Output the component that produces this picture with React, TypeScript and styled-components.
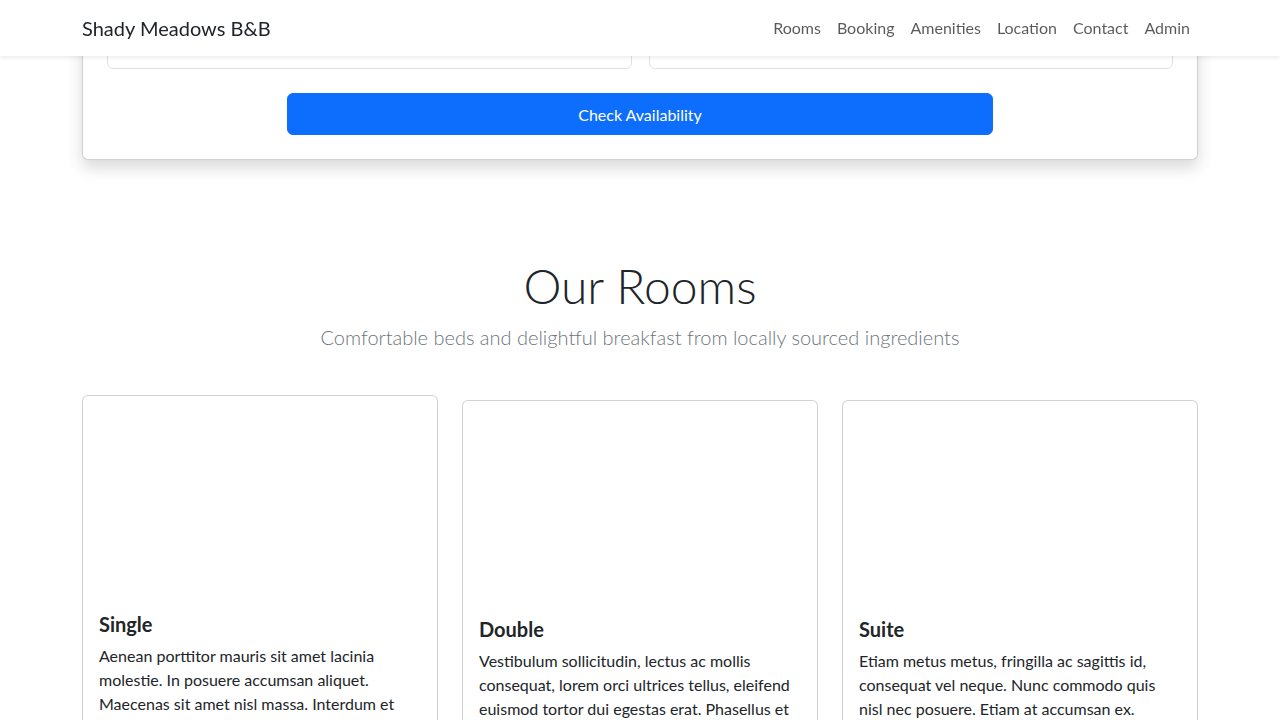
import React, { useLayoutEffect, useRef } from "react";
import styled, { createGlobalStyle } from "styled-components";

const FONT = `Lato, "Open Sans", "Liberation Sans", sans-serif`;

const Global = createGlobalStyle`
  html { scroll-behavior: auto; }
  html, body { margin: 0; padding: 0; }
  body {
    font-family: ${FONT};
    font-size: 16px;
    line-height: 1.5;
    color: #212529;
    background: #fff;
  }
  *, *::before, *::after { box-sizing: border-box; }
`;

const Container = styled.div`
  max-width: 1140px;
  margin: 0 auto;
  padding: 0 12px;
`;

const NavBar = styled.nav`
  position: fixed;
  top: 0;
  left: 0;
  right: 0;
  z-index: 20;
  height: 56px;
  background: #fff;
  box-shadow: 0 0.125rem 0.25rem rgba(0, 0, 0, 0.075);
`;

const NavInner = styled(Container)`
  display: flex;
  align-items: center;
  justify-content: space-between;
  height: 100%;
`;

const Brand = styled.a`
  font-size: 20px;
  line-height: 30px;
  color: #212529;
  text-decoration: none;
`;

const NavList = styled.ul`
  display: flex;
  list-style: none;
  margin: 0;
  padding: 0;
`;

const NavLink = styled.a`
  display: block;
  padding: 8px;
  font-size: 16px;
  color: rgba(0, 0, 0, 0.65);
  text-decoration: none;
`;

const Hero = styled.header`
  padding: 140px 0 120px;
  background: #f1f3f5;
  text-align: center;
`;

const HeroTitle = styled.h1`
  margin: 0 0 12px;
  font-size: 40px;
  font-weight: 300;
`;

const BookingSection = styled.section`
  padding: 48px 0 48px;
`;

const BookingCard = styled.div`
  background: #fff;
  border: 1px solid rgba(0, 0, 0, 0.175);
  border-radius: 6px;
  box-shadow: 0 0.5rem 1rem rgba(0, 0, 0, 0.15);
  padding: 24px;
`;

const BookingTitle = styled.h3`
  margin: 0 0 24px;
  font-size: 24px;
  font-weight: 500;
  text-align: center;
`;

const DateRow = styled.div`
  display: grid;
  grid-template-columns: 1fr 1fr;
  gap: 17px;
`;

const Field = styled.div`
  display: flex;
  flex-direction: column;
`;

const Label = styled.label`
  margin-bottom: 8px;
`;

const DateInput = styled.input`
  height: 39px;
  padding: 0 12px 10px;
  font-family: ${FONT};
  font-size: 16px;
  color: #212529;
  border: 1px solid #dee2e6;
  border-radius: 6px;
  background: #fff;
`;

const ButtonRow = styled.div`
  display: flex;
  justify-content: center;
  margin-top: 24px;
`;

const PrimaryButton = styled.button`
  width: 706px;
  height: 42px;
  border: 1px solid #0d6efd;
  border-radius: 6px;
  background: #0d6efd;
  color: #fff;
  font-family: ${FONT};
  font-size: 16px;
`;

const RoomsSection = styled.section`
  padding: 49px 0 48px;
`;

const SectionHead = styled.div`
  text-align: center;
  margin-bottom: 48px;
`;

const SectionTitle = styled.h2`
  margin: 0 0 7px;
  font-size: 48px;
  font-weight: 300;
  line-height: 1.2;
`;

const Lead = styled.p`
  margin: 0;
  font-size: 20px;
  font-weight: 300;
  color: #6c757d;
`;

const RoomGrid = styled.div`
  display: grid;
  grid-template-columns: repeat(3, 1fr);
  gap: 24px;
  align-items: start;
`;

const RoomCard = styled.div<{ $raised?: boolean }>`
  border: 1px solid rgba(0, 0, 0, 0.175);
  border-radius: 6px;
  background: #fff;
  overflow: hidden;
  transform: ${(p) => (p.$raised ? "translateY(-5px)" : "none")};
`;

const RoomImage = styled.div`
  height: 200px;
`;

const RoomBody = styled.div`
  padding: 16px;
`;

const RoomTitle = styled.h5`
  margin: 0 0 8px;
  font-size: 20px;
  font-weight: 700;
  line-height: 1.2;
`;

const RoomText = styled.p`
  margin: 0 0 16px;
`;

const Price = styled.div`
  font-size: 20px;
  font-weight: 700;
  margin-bottom: 12px;
`;

const OutlineButton = styled.a`
  display: inline-block;
  padding: 6px 12px;
  border: 1px solid #0d6efd;
  border-radius: 6px;
  color: #0d6efd;
  text-decoration: none;
`;

const Footer = styled.footer`
  padding: 48px 0;
  background: #212529;
  color: #fff;
  text-align: center;
`;

const rooms = [
  {
    name: "Single",
    text:
      "Aenean porttitor mauris sit amet lacinia molestie. In posuere accumsan aliquet. Maecenas sit amet nisl massa. Interdum et malesuada fames ac ante.",
    price: "£100",
    raised: true,
  },
  {
    name: "Double",
    text:
      "Vestibulum sollicitudin, lectus ac mollis consequat, lorem orci ultrices tellus, eleifend euismod tortor dui egestas erat. Phasellus et ipsum nisl.",
    price: "£150",
  },
  {
    name: "Suite",
    text:
      "Etiam metus metus, fringilla ac sagittis id, consequat vel neque. Nunc commodo quis nisl nec posuere. Etiam at accumsan ex.",
    price: "£225",
  },
];

const links = ["Rooms", "Booking", "Amenities", "Location", "Contact", "Admin"];

export default function App() {
  const cardRef = useRef<HTMLDivElement>(null);

  useLayoutEffect(() => {
    if (cardRef.current) {
      const r = cardRef.current.getBoundingClientRect();
      window.scrollTo(0, window.scrollY + r.bottom - 160);
    }
  }, []);

  return (
    <>
      <Global />
      <NavBar>
        <NavInner>
          <Brand href="#">Shady Meadows B&amp;B</Brand>
          <NavList>
            {links.map((l) => (
              <li key={l}>
                <NavLink href="#">{l}</NavLink>
              </li>
            ))}
          </NavList>
        </NavInner>
      </NavBar>

      <Hero>
        <Container>
          <HeroTitle>Welcome to Shady Meadows B&amp;B</HeroTitle>
        </Container>
      </Hero>

      <BookingSection>
        <Container>
          <BookingCard ref={cardRef}>
            <BookingTitle>Check Availability &amp; Book Your Stay</BookingTitle>
            <DateRow>
              <Field>
                <Label>Check In</Label>
                <DateInput readOnly value="14/07/2025" />
              </Field>
              <Field>
                <Label>Check Out</Label>
                <DateInput readOnly value="15/07/2025" />
              </Field>
            </DateRow>
            <ButtonRow>
              <PrimaryButton type="button">Check Availability</PrimaryButton>
            </ButtonRow>
          </BookingCard>
        </Container>
      </BookingSection>

      <RoomsSection>
        <Container>
          <SectionHead>
            <SectionTitle>Our Rooms</SectionTitle>
            <Lead>Comfortable beds and delightful breakfast from locally sourced ingredients</Lead>
          </SectionHead>
          <RoomGrid>
            {rooms.map((r) => (
              <RoomCard key={r.name} $raised={r.raised}>
                <RoomImage />
                <RoomBody>
                  <RoomTitle>{r.name}</RoomTitle>
                  <RoomText>{r.text}</RoomText>
                  <Price>{r.price} per night</Price>
                  <OutlineButton href="#">Book now</OutlineButton>
                </RoomBody>
              </RoomCard>
            ))}
          </RoomGrid>
        </Container>
      </RoomsSection>

      <Footer>© Shady Meadows B&amp;B</Footer>
    </>
  );
}
